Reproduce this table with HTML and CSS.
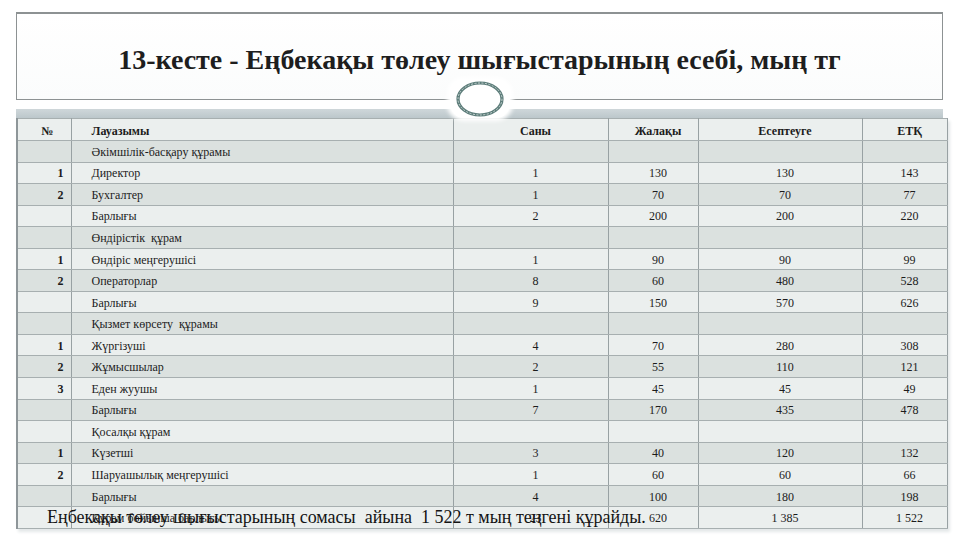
FILE: index.html
```html
<!DOCTYPE html>
<html>
<head>
<meta charset="utf-8">
<link rel="stylesheet" href="styles.css">
</head>
<body>
<div class="slide">
  <div class="frame">
    <h1 class="title">13-кесте - Еңбекақы төлеу шығыстарының есебі, мың тг</h1>
  </div>
  <div class="ornament">
    <svg width="56" height="38" viewBox="0 0 56 38">
      <ellipse cx="28" cy="19" rx="22" ry="16" fill="none" stroke="#5d7d7a" stroke-width="3.2"/>
      <ellipse cx="28" cy="19" rx="22" ry="16" fill="none" stroke="#c9d6d4" stroke-width="1" stroke-dasharray="2 1.5"/>
    </svg>
  </div>
  <div class="band"></div>
  <table class="grid">
    <colgroup>
      <col class="c-no"><col class="c-name"><col class="c-n"><col class="c-s"><col class="c-e"><col class="c-t">
    </colgroup>
    <tr class="head light">
      <td class="no-head">№</td><td class="name">Лауазымы</td><td class="num">Саны</td><td class="num">Жалақы</td><td class="num">Есептеуге</td><td class="num">ЕТҚ</td>
    </tr>
    <tr class="dark"><td></td><td class="name">Әкімшілік-басқару құрамы</td><td></td><td></td><td></td><td></td></tr>
    <tr class="light"><td class="no">1</td><td class="name">Директор</td><td class="num">1</td><td class="num">130</td><td class="num">130</td><td class="num">143</td></tr>
    <tr class="dark"><td class="no">2</td><td class="name">Бухгалтер</td><td class="num">1</td><td class="num">70</td><td class="num">70</td><td class="num">77</td></tr>
    <tr class="light"><td></td><td class="name">Барлығы</td><td class="num">2</td><td class="num">200</td><td class="num">200</td><td class="num">220</td></tr>
    <tr class="dark"><td></td><td class="name">Өндірістік&nbsp; құрам</td><td></td><td></td><td></td><td></td></tr>
    <tr class="light"><td class="no">1</td><td class="name">Өндіріс меңгерушісі</td><td class="num">1</td><td class="num">90</td><td class="num">90</td><td class="num">99</td></tr>
    <tr class="dark"><td class="no">2</td><td class="name">Операторлар</td><td class="num">8</td><td class="num">60</td><td class="num">480</td><td class="num">528</td></tr>
    <tr class="light"><td></td><td class="name">Барлығы</td><td class="num">9</td><td class="num">150</td><td class="num">570</td><td class="num">626</td></tr>
    <tr class="dark"><td></td><td class="name">Қызмет көрсету&nbsp; құрамы</td><td></td><td></td><td></td><td></td></tr>
    <tr class="light"><td class="no">1</td><td class="name">Жүргізуші</td><td class="num">4</td><td class="num">70</td><td class="num">280</td><td class="num">308</td></tr>
    <tr class="dark"><td class="no">2</td><td class="name">Жұмысшылар</td><td class="num">2</td><td class="num">55</td><td class="num">110</td><td class="num">121</td></tr>
    <tr class="light"><td class="no">3</td><td class="name">Еден жуушы</td><td class="num">1</td><td class="num">45</td><td class="num">45</td><td class="num">49</td></tr>
    <tr class="dark"><td></td><td class="name">Барлығы</td><td class="num">7</td><td class="num">170</td><td class="num">435</td><td class="num">478</td></tr>
    <tr class="light"><td></td><td class="name">Қосалқы құрам</td><td></td><td></td><td></td><td></td></tr>
    <tr class="dark"><td class="no">1</td><td class="name">Күзетші</td><td class="num">3</td><td class="num">40</td><td class="num">120</td><td class="num">132</td></tr>
    <tr class="light"><td class="no">2</td><td class="name">Шаруашылық меңгерушісі</td><td class="num">1</td><td class="num">60</td><td class="num">60</td><td class="num">66</td></tr>
    <tr class="dark"><td></td><td class="name">Барлығы</td><td class="num">4</td><td class="num">100</td><td class="num">180</td><td class="num">198</td></tr>
    <tr class="light"><td></td><td class="name">Құрам бойынша барлығы</td><td class="num">23</td><td class="num">620</td><td class="num">1 385</td><td class="num">1 522</td></tr>
  </table>
  <p class="summary">Еңбекақы төлеу шығыстарының сомасы&nbsp; айына&nbsp; 1 522 т мың теңгені құрайды.</p>
</div>
</body>
</html>
```

FILE: styles.css
```css
html, body {
  margin: 0;
  padding: 0;
  background: #ffffff;
}

body {
  font-family: "Liberation Serif", serif;
}

.slide {
  position: relative;
  width: 960px;
  height: 540px;
  padding: 12px 0 0 16px;
  box-sizing: border-box;
  font-family: "Liberation Serif", serif;
  color: #1a1a1a;
}

.frame {
  width: 927px;
  height: 88px;
  box-sizing: border-box;
  border: 1px solid #8d9293;
  border-top-width: 2px;
  background: linear-gradient(#ffffff, #fbfcfc);
  display: flex;
  align-items: center;
  justify-content: center;
}

.title {
  margin: 6px 0 0 0;
  font-family: "Liberation Serif", serif;
  font-size: 28px;
  font-weight: bold;
  color: #1e1e1e;
  white-space: nowrap;
}

.ornament {
  position: absolute;
  left: 450px;
  top: 80px;
  width: 60px;
  height: 38px;
  background: #ffffff;
  border-radius: 14px;
  box-shadow: 0 0 4px 3px #ffffff;
  display: flex;
  align-items: center;
  justify-content: center;
}

.band {
  width: 927px;
  height: 9px;
  margin-top: 9px;
  background: linear-gradient(#cfd7da, #bcc7cb);
}

.grid {
  width: 930px;
  border-collapse: collapse;
  table-layout: fixed;
  font-family: "Liberation Serif", serif;
  font-size: 12px;
  color: #1c1c1c;
  border-left: 2px solid #8e9699;
  box-shadow: 2px 3px 3px #e4e8e9;
}

.c-no { width: 54px; }
.c-name { width: 382px; }
.c-n { width: 155px; }
.c-s { width: 90px; }
.c-e { width: 164px; }
.c-t { width: 85px; }

.grid tr {
  height: 21.56px;
}

.grid tr.head {
  height: 22px;
}

.grid td {
  padding: 2px 0 0 0;
  border: 1px solid #98a1a3;
  border-top-color: #a7afb0;
  border-bottom-color: #a7afb0;
  vertical-align: middle;
  white-space: nowrap;
  overflow: hidden;
}

.grid tr.head td {
  padding-top: 4px;
}

.light { background: #ebefee; }
.dark { background: #dbe1df; }

.no {
  text-align: right;
  padding-right: 7px !important;
  font-weight: bold;
}

.no-head {
  text-align: center;
  padding-left: 6px !important;
}

.name {
  padding-left: 20px !important;
}

.num {
  text-align: center;
  padding-left: 10px !important;
}

.head td {
  font-weight: bold;
}

.summary {
  position: absolute;
  left: 47px;
  top: 506px;
  margin: 0;
  font-family: "Liberation Serif", serif;
  font-size: 18px;
  line-height: 22px;
  color: #141414;
  white-space: nowrap;
}
```
